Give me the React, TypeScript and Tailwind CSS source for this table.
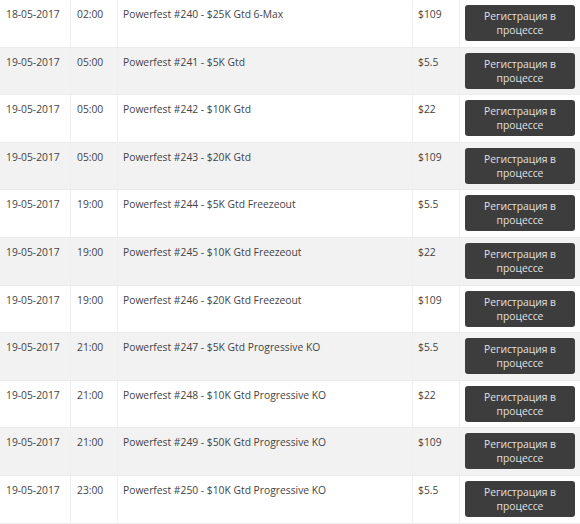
import React from 'react';

const rows = [
  { date: '18-05-2017', time: '02:00', name: 'Powerfest #240 - $25K Gtd 6-Max', buyin: '$109' },
  { date: '19-05-2017', time: '05:00', name: 'Powerfest #241 - $5K Gtd', buyin: '$5.5' },
  { date: '19-05-2017', time: '05:00', name: 'Powerfest #242 - $10K Gtd', buyin: '$22' },
  { date: '19-05-2017', time: '05:00', name: 'Powerfest #243 - $20K Gtd', buyin: '$109' },
  { date: '19-05-2017', time: '19:00', name: 'Powerfest #244 - $5K Gtd Freezeout', buyin: '$5.5' },
  { date: '19-05-2017', time: '19:00', name: 'Powerfest #245 - $10K Gtd Freezeout', buyin: '$22' },
  { date: '19-05-2017', time: '19:00', name: 'Powerfest #246 - $20K Gtd Freezeout', buyin: '$109' },
  { date: '19-05-2017', time: '21:00', name: 'Powerfest #247 - $5K Gtd Progressive KO', buyin: '$5.5' },
  { date: '19-05-2017', time: '21:00', name: 'Powerfest #248 - $10K Gtd Progressive KO', buyin: '$22' },
  { date: '19-05-2017', time: '21:00', name: 'Powerfest #249 - $50K Gtd Progressive KO', buyin: '$109' },
  { date: '19-05-2017', time: '23:00', name: 'Powerfest #250 - $10K Gtd Progressive KO', buyin: '$5.5' },
];

export default function App() {
  return (
    <div className="w-[580px] h-[524px] overflow-hidden bg-white text-[#444] text-[10.3px] font-['Open_Sans',sans-serif]">
      {rows.map((r, i) => (
        <div
          key={i}
          className={`grid grid-cols-[71px_47px_295px_47px_120px] h-[47.6px] border-b border-[#ececec] ${i % 2 === 1 ? 'bg-[#f2f2f2]' : 'bg-white'}`}
        >
          <div className="pl-[6px] pt-[7px] border-r border-[#efefef]">{r.date}</div>
          <div className="pl-[6px] pt-[7px] border-r border-[#efefef]">{r.time}</div>
          <div className="pl-[5px] pt-[7px] border-r border-[#efefef]">{r.name}</div>
          <div className="pl-[5px] pt-[7px] border-r border-[#efefef]">{r.buyin}</div>
          <div className="pl-[5px] pt-[5px]">
            <button className="w-[110px] h-[36px] rounded-[3px] bg-[#3d3d3d] text-[#e0e0e0] text-[10.3px] leading-[14px] flex flex-col items-center justify-center">
              <span>Регистрация в</span>
              <span>процессе</span>
            </button>
          </div>
        </div>
      ))}
    </div>
  );
}
